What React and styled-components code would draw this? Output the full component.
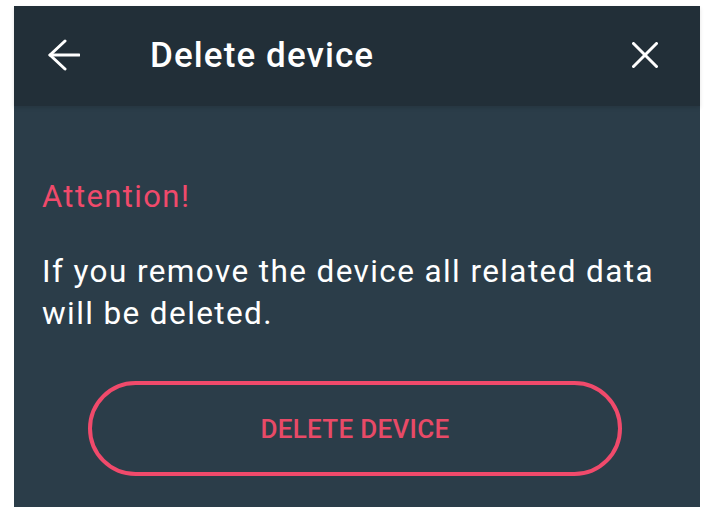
import React from 'react'
import styled, { createGlobalStyle } from 'styled-components'

const GlobalStyle = createGlobalStyle`
  body {
    margin: 0;
    background: #ffffff;
    font-family: Roboto, "Liberation Sans", sans-serif;
  }
`

const Page = styled.div`
  padding: 6px 13px 6px 14px;
`

const Dialog = styled.div`
  width: 686px;
  height: 501px;
  background: #2b3d49;
  display: flex;
  flex-direction: column;
`

const Header = styled.header`
  height: 100px;
  box-sizing: border-box;
  padding: 0 38px 2px 33px;
  background: #222f38;
  box-shadow: 0 2px 4px rgba(0, 0, 0, 0.12);
  display: flex;
  align-items: center;
  color: #ffffff;
`

const IconButton = styled.button`
  background: none;
  border: none;
  padding: 0;
  width: 34px;
  height: 34px;
  display: flex;
  align-items: center;
  justify-content: center;
  color: #ffffff;
`

const Title = styled.h1`
  flex: 1;
  margin: 0 0 0 69px;
  font-size: 35px;
  font-weight: 500;
  letter-spacing: 1.1px;
`

const Body = styled.div`
  flex: 1;
  padding: 71px 28px 0 28px;
  display: flex;
  flex-direction: column;
`

const Warning = styled.p`
  margin: 0;
  color: #f04a6b;
  font-size: 31px;
  line-height: 40px;
  letter-spacing: 1.4px;
`

const Message = styled.p`
  margin: 34px 0 0;
  color: #ffffff;
  font-size: 31.5px;
  line-height: 42px;
  letter-spacing: 1.4px;
`

const OutlineButton = styled.button`
  align-self: center;
  margin: 46px 4px 0 0;
  width: 534px;
  height: 95px;
  border: 4px solid #f04a6b;
  border-radius: 48px;
  background: transparent;
  color: #e84a67;
  font-family: Roboto, "Liberation Sans", sans-serif;
  font-size: 26px;
  font-weight: 500;
  letter-spacing: 0.3px;
`

const ArrowIcon = () => (
  <svg width="32" height="32" viewBox="0 0 32 32" fill="none" stroke="currentColor" strokeWidth="3" strokeLinecap="round" strokeLinejoin="round">
    <path d="M31 16H2" />
    <path d="M17 2L2 16l15 14" />
  </svg>
)

const CloseIcon = () => (
  <svg width="26" height="26" viewBox="0 0 26 26" fill="none" stroke="currentColor" strokeWidth="3" strokeLinecap="round">
    <path d="M1.5 1.5L24.5 24.5" />
    <path d="M24.5 1.5L1.5 24.5" />
  </svg>
)

export default function App() {
  return (
    <>
      <GlobalStyle />
      <Page>
        <Dialog>
          <Header>
            <IconButton aria-label="Back"><ArrowIcon /></IconButton>
            <Title>Delete device</Title>
            <IconButton aria-label="Close"><CloseIcon /></IconButton>
          </Header>
          <Body>
            <Warning>Attention!</Warning>
            <Message>If you remove the device all related data will be deleted.</Message>
            <OutlineButton>DELETE DEVICE</OutlineButton>
          </Body>
        </Dialog>
      </Page>
    </>
  )
}
